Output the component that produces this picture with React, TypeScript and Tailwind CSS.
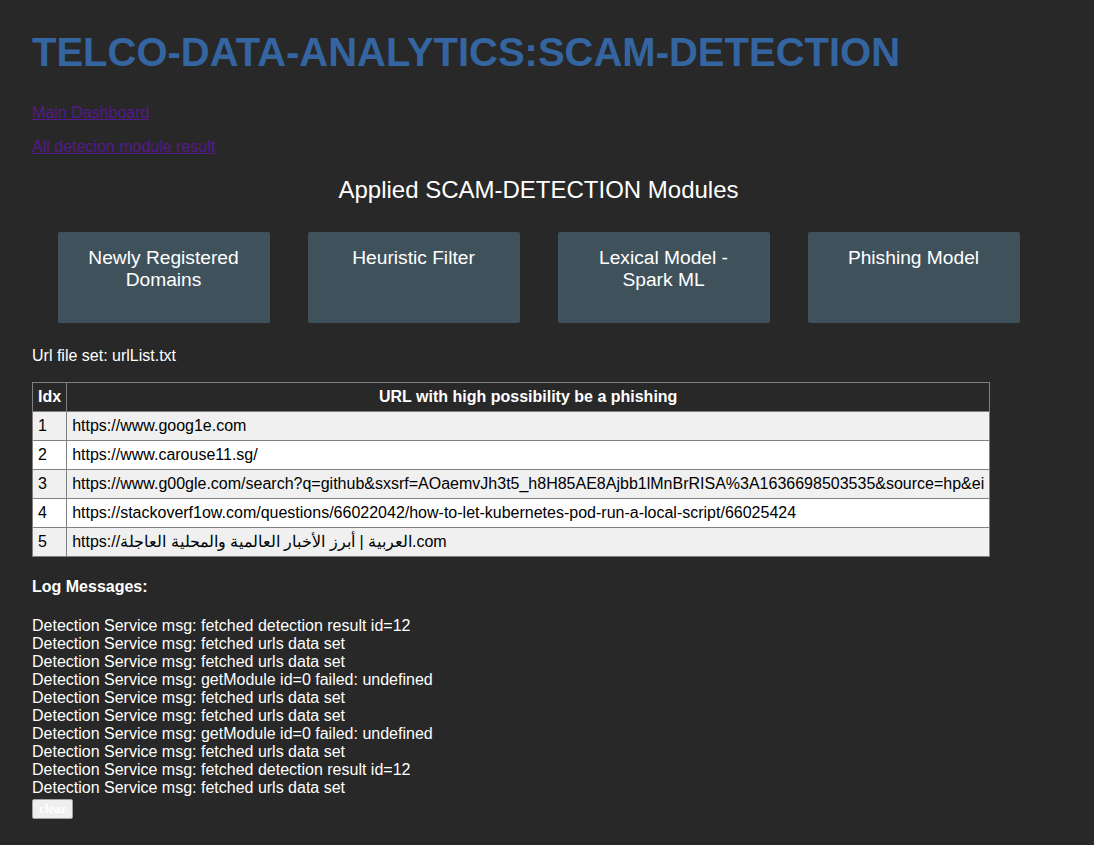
const modules = [
  "Newly Registered Domains",
  "Heuristic Filter",
  "Lexical Model - Spark ML",
  "Phishing Model",
];

const urls = [
  "https://www.goog1e.com",
  "https://www.carouse11.sg/",
  "https://www.g00gle.com/search?q=github&sxsrf=AOaemvJh3t5_h8H85AE8Ajbb1lMnBrRISA%3A1636698503535&source=hp&ei",
  "https://stackoverf1ow.com/questions/66022042/how-to-let-kubernetes-pod-run-a-local-script/66025424",
  "https://العربية | أبرز الأخبار العالمية والمحلية العاجلة.com",
];

const logs = [
  "Detection Service msg: fetched detection result id=12",
  "Detection Service msg: fetched urls data set",
  "Detection Service msg: fetched urls data set",
  "Detection Service msg: getModule id=0 failed: undefined",
  "Detection Service msg: fetched urls data set",
  "Detection Service msg: fetched urls data set",
  "Detection Service msg: getModule id=0 failed: undefined",
  "Detection Service msg: fetched urls data set",
  "Detection Service msg: fetched detection result id=12",
  "Detection Service msg: fetched urls data set",
];

const App = () => {
  return (
    <div className="min-h-[853px] bg-[#282828]">
      <div className="w-[1077px] px-8 pt-[29px] pb-[35px] font-['Liberation_Sans',Arial,sans-serif] text-[16px] leading-[18px] text-white">
        <h1 className="text-[40px] leading-[46px] font-bold text-[#3465a0]">
          TELCO-DATA-ANALYTICS:SCAM-DETECTION
        </h1>

        <p className="mt-[29px]">
          <a href="#" className="text-[#551a8b] underline">
            Main Dashboard
          </a>
        </p>
        <p className="mt-4">
          <a href="#" className="text-[#551a8b] underline">
            All detecion module result
          </a>
        </p>

        <h2 className="mt-[20px] text-center text-[24px] leading-[28px]">
          Applied SCAM-DETECTION Modules
        </h2>

        <div className="mt-[28px] flex justify-center gap-[38px]">
          {modules.map((m) => (
            <div
              key={m}
              className="h-[91px] w-[212px] rounded-[2px] bg-[#3f525c] px-5 pt-[15px] text-center text-[19.2px] leading-[22px]"
            >
              {m}
            </div>
          ))}
        </div>

        <p className="mt-[24px]">Url file set: urlList.txt</p>

        <table className="mt-[17px] border-collapse border border-[#808080]">
          <thead>
            <tr>
              <th className="border border-[#808080] px-[5px] py-[5px] text-left font-bold">
                Idx
              </th>
              <th className="border border-[#808080] px-[5px] py-[5px] text-center font-bold">
                URL with high possibility be a phishing
              </th>
            </tr>
          </thead>
          <tbody>
            {urls.map((u, i) => (
              <tr
                key={i}
                className={i % 2 === 0 ? "bg-[#f0f0f0] text-black" : "bg-white text-black"}
              >
                <td className="border border-[#808080] px-[5px] py-[5px]">{i + 1}</td>
                <td className="border border-[#808080] px-[5px] py-[5px] whitespace-nowrap">
                  {u}
                </td>
              </tr>
            ))}
          </tbody>
        </table>

        <p className="mt-[21px] font-bold">Log Messages:</p>

        <div className="mt-[21px]">
          {logs.map((l, i) => (
            <div key={i}>{l}</div>
          ))}
        </div>

        <button className="mt-[2px] h-5 rounded-[2px] border border-[#a0a0a0] bg-[#efefef] px-[6px] font-['Liberation_Serif',serif] text-[13px] leading-[16px] font-bold text-white">
          clear
        </button>
      </div>
    </div>
  );
};

export default App;
